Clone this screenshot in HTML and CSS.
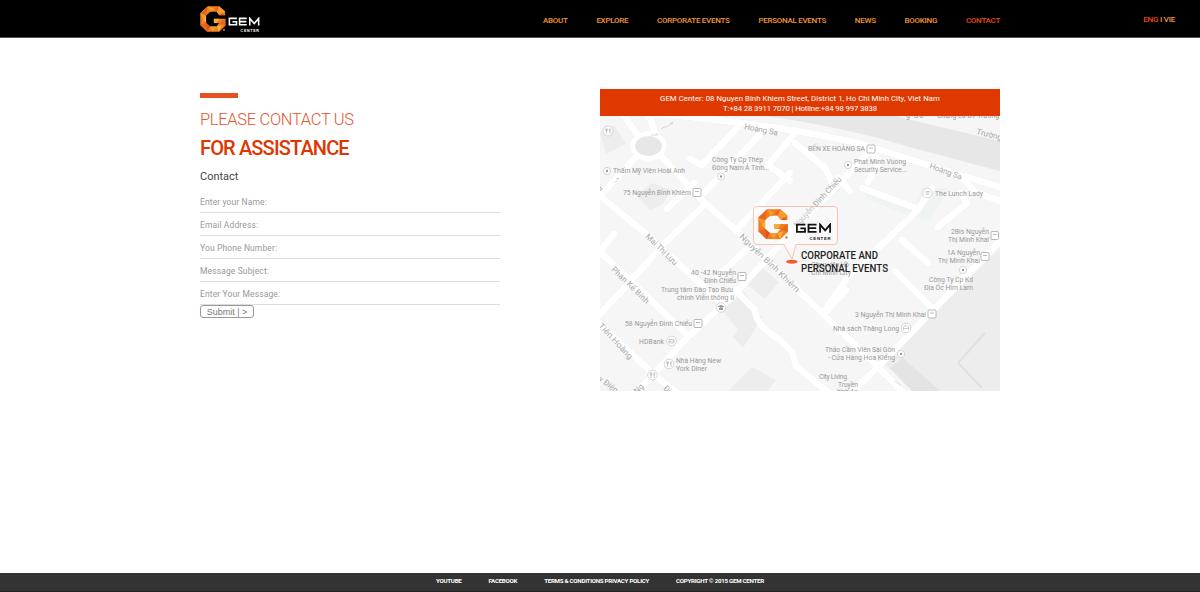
FILE: index.html
```html
<!DOCTYPE html>
<html lang="en">
<head>
<meta charset="utf-8">
<title>GEM Center - Contact</title>
<link rel="stylesheet" href="styles.css">
</head>
<body>
<svg class="defs" width="0" height="0">
  <symbol id="gem-g" viewBox="0 0 90 90">
    <path fill="#f07f1e" d="M27 1H66L87 19V32H67L58 20H36L21 33V58L35 71H57L66 59H48V44H88V68L66 89H25L1 66V25Z"/>
    <path fill="#f79a30" d="M27 1L50 10L36 20ZM66 1L87 19L67 32L58 20ZM1 25L21 33L11 48ZM35 71L57 71L45 89Z"/>
    <path fill="#e8661f" d="M1 25L27 1L21 33ZM50 10L66 1L58 20ZM1 66L21 58L25 89ZM88 44L66 59L88 68Z"/>
    <path fill="#fbab3c" d="M11 48L21 33V58ZM66 89L57 71L75 66ZM48 44H67L58 59H48Z"/>
    <path fill="#d9541d" d="M25 89L35 71L21 58ZM87 32L67 32L76 25Z"/>
  </symbol>
  <symbol id="gem-word" viewBox="0 0 94 44">
    <g fill="none" stroke="currentColor" stroke-width="4.6">
      <path d="M26 4H4V23H25V14H13M55 4H34V23H55M34 13.500H54M64 25V4L77 19L90 4V25"/>
    </g>
    <text class="word-sub" x="37" y="43" textLength="54">CENTER</text>
  </symbol>
</svg>

<header class="header">
  <div class="wrap header-row">
    <a class="logo"><svg class="logo-g"><use href="#gem-g"/></svg><i class="logo-dot"></i><svg class="logo-word"><use href="#gem-word"/></svg></a>
    <nav class="nav">
      <a>ABOUT</a><a>EXPLORE</a><a>CORPORATE EVENTS</a><a>PERSONAL EVENTS</a><a>NEWS</a><a>BOOKING</a><a class="active">CONTACT</a>
    </nav>
  </div>
  <div class="lang"><span class="active">ENG</span> I VIE</div>
</header>

<main class="wrap main">
  <section class="contact">
    <div class="accent"></div>
    <h1 class="title"><span class="title-light">PLEASE CONTACT US</span><span class="title-bold">FOR ASSISTANCE</span></h1>
    <h2 class="subtitle">Contact</h2>
    <form class="form">
      <label class="field">Enter your Name:</label>
      <label class="field">Email Address:</label>
      <label class="field">You Phone Number:</label>
      <label class="field">Message Subject:</label>
      <label class="field">Enter Your Message:</label>
      <button class="submit" type="button">Submit | &gt;</button>
    </form>
  </section>

  <section class="location">
    <p class="address"><span class="street">GEM Center: 08 Nguyen Binh Khiem Street, District 1, Ho Chi Minh City, Viet Nam</span><span class="phones">T:+84 28 3911 7070 | Hotline:+84 98 997 3838</span></p>
    <svg class="map" viewBox="600 116 400 275">
      <rect x="600" y="116" width="400" height="275" fill="#f6f6f6"/>
      <g fill="#ededed">
        <path d="M600 133L614 125L626 144L606 154ZM636 195L652 183L672 190L662 205L650 210ZM742 280L762 268L779 282L765 299ZM722 310L745 292L762 318L743 348L733 337L738 330ZM728 391L752 367L776 380L768 391ZM1000 248L884 364L914 391H1000Z"/>
        <path fill="#e7e7e7" d="M765 116H895L1000 141V171Q930 153 882 139Q820 123 765 116Z"/>
        <path fill="#e4e4e4" d="M890 368L903 358L940 391H912Z"/>
        <path fill="#f0f3f3" d="M864 190L915 205L922 188H948L930 221L908 215L866 199Z"/>
      </g>
      <path fill="none" stroke="#e0e0e0" stroke-width="2" d="M985 333L958 363L982 388"/>
      <g class="roads-edge"><use href="#roads"/></g>
      <g id="roads" class="roads">
        <path d="M622 113L640 138M655 136Q653 120 645 113M637 156L600 196M661 156L705 203L738 232L795 287L878 367L905 394"/>
        <path d="M650 113Q780 125 858 143Q930 166 1003 188"/>
        <path d="M738 127L702 165L690 159M765 129L700 197M795 133L768 165L790 181M790 173L736 230"/>
        <path d="M635 394L685 340L738 290L795 228L836 187L870 150M600 196L645 233L680 265L722 303M705 204L665 243L618 295L597 317M597 249L648 297L688 336M597 321L653 374L678 394"/>
        <path d="M718 276L752 244M850 394L878 367L933 310L1003 238M825 310L848 277L918 210L932 188M827 311L846 290M933 309L895 271M928 263L902 240M938 227L967 203L960 193M862 188L918 209"/>
        <path d="M667 209L694 183M614 234L601 250M735 290L755 310Q755 325 780 340L792 352L796 366L830 394M839 178L850 191M795 143L825 168L835 188M870 151L880 161L868 182M960 175L975 192L1003 202"/>
      </g>
      <ellipse cx="648.500" cy="146" rx="18" ry="15" fill="#fff"/>
      <ellipse cx="648.500" cy="146" rx="13" ry="9.500" fill="#e7e7e7" stroke="#ddd" stroke-width=".5"/>
      <g class="places">
        <text x="613" y="173" textLength="72">Thẩm Mỹ Viện Hoài Anh</text>
        <text x="712" y="162" textLength="51">Công Ty Cp Thép</text>
        <text x="712" y="170" textLength="57">Đông Nam Á Tính...</text>
        <text x="623" y="195" textLength="68">75 Nguyễn Bỉnh Khiêm</text>
        <text x="808" y="151" textLength="57">BẾN XE HOÀNG SA</text>
        <text x="854" y="164" textLength="52">Phat Minh Vuong</text>
        <text x="854" y="172" textLength="53">Security Service...</text>
        <text x="935" y="196" textLength="48">The Lunch Lady</text>
        <text x="951" y="234" textLength="38">2Bis Nguyễn</text>
        <text x="948" y="242" textLength="41">Thị Minh Khai</text>
        <text x="947" y="255" textLength="33">1A Nguyễn</text>
        <text x="938" y="263" textLength="42">Thị Minh Khai</text>
        <text x="929" y="282" textLength="44">Công Ty Cp Kd</text>
        <text x="924" y="290" textLength="49">Địa Ốc Him Lam</text>
        <text x="691" y="275" textLength="45">40 -42 Nguyễn</text>
        <text x="704" y="283" textLength="32">Đình Chiểu</text>
        <text x="661" y="292" textLength="72">Trung tâm Đào Tạo Bưu</text>
        <text x="677" y="300" textLength="57">chính Viễn thông II</text>
        <text x="625" y="326" textLength="67">58 Nguyễn Đình Chiểu</text>
        <text x="639" y="344" textLength="25">HDBank</text>
        <text x="676" y="363" textLength="45">Nhà Hàng New</text>
        <text x="676" y="371" textLength="31">York Diner</text>
        <text x="855" y="317" textLength="71">3 Nguyễn Thị Minh Khai</text>
        <text x="833" y="331" textLength="66">Nhà sách Thăng Long</text>
        <text x="825" y="352" textLength="70">Thảo Cầm Viên Sài Gòn</text>
        <text x="828" y="360" textLength="67">- Cửa Hàng Hoa Kiểng</text>
        <text x="819" y="379" textLength="28">City Living</text>
        <text x="838" y="387" textLength="20">Truyền</text>
        <text x="837" y="394" textLength="21">hình An</text>
        <text x="811" y="267" textLength="38">Công viên Hồ</text>
        <text x="811" y="275" textLength="40">Chi Minh City</text>
        <text x="937" y="118" textLength="62">Chung cư D7 Trường</text>
        <text x="906" y="118" textLength="17">g Sa</text>
      </g>
      <g class="streets">
        <text transform="translate(744 129) rotate(11)" textLength="34">Hoàng Sa</text>
        <text transform="translate(976 134) rotate(14)" textLength="26">Trường</text>
        <text transform="translate(929 168) rotate(20)" textLength="34">Hoàng Sa</text>
        <text transform="translate(645 237) rotate(44)" textLength="41">Mai Thị Lựu</text>
        <text transform="translate(739 237) rotate(44)" textLength="80" lengthAdjust="spacingAndGlyphs">Nguyễn Bỉnh Khiêm</text>
        <text transform="translate(797 228) rotate(-47)" textLength="66">Nguyễn Đình Chiểu</text>
        <text transform="translate(611 270) rotate(44)" textLength="49">Phan Kế Bính</text>
        <text transform="translate(598 326) rotate(47)" textLength="46" lengthAdjust="spacingAndGlyphs">Tiên Hoàng</text>
        <text transform="translate(598 380) rotate(37)" textLength="22">y Điệp</text>
        <text transform="translate(663 389) rotate(42)">Đi</text>
        <text transform="translate(637 394) rotate(-45)">Ng</text>
        <text transform="translate(597 195) rotate(-50)">Lu</text>
      </g>
      <g class="dots">
        <circle cx="607" cy="171" r="3.600"/><circle cx="721" cy="176.500" r="3.600"/><circle cx="848" cy="165" r="3.600"/><circle cx="963" cy="270" r="3.600"/><circle cx="901" cy="354" r="3.600"/>
      </g>
      <g fill="#999"><circle cx="607" cy="171" r="1.200"/><circle cx="721" cy="176.500" r="1.200"/><circle cx="848" cy="165" r="1.200"/><circle cx="963" cy="270" r="1.200"/><circle cx="901" cy="354" r="1.200"/></g>
      <g class="dots">
        <circle cx="608" cy="131" r="5"/><circle cx="652.500" cy="375" r="4.800"/><circle cx="669" cy="364" r="4.800"/><circle cx="671.500" cy="341" r="4.800"/><circle cx="721" cy="307.500" r="4.800"/><circle cx="906" cy="328" r="4.800"/><circle cx="927.500" cy="193" r="4.800"/>
      </g>
      <g class="glyphs">
        <path d="M606.500 128.500V134M605.800 128.500V131H607.200V128.500M610 134V128.500L609.300 131H610M651 372.500V378M650.300 372.500V375H651.700V372.500M654.500 378V372.500L653.800 375H654.500M667.500 361.500V367M666.800 361.500V364H668.200V361.500M671 367V361.500L670.300 364H671"/>
        <path d="M669 339.500H674V343H669ZM669 341.200H674M903.500 330V327Q906 324 908.500 327V330M903.500 328.500H908.500M925.500 191.500H930M925.500 193H929.500M926 194.500H929"/>
        <path fill="#999" stroke="none" d="M717.500 306.500L721 304.800L724.500 306.500L721 308ZM719 308H723V310H719Z"/>
      </g>
      <g class="stops">
        <rect x="693" y="188.500" width="8" height="8" rx="1"/><rect x="867" y="145" width="8" height="8" rx="1"/><rect x="991" y="231.500" width="7.500" height="8" rx="1"/><rect x="981" y="252.500" width="8" height="8" rx="1"/><rect x="738" y="272.500" width="8" height="8" rx="1"/><rect x="694" y="319.500" width="8" height="8" rx="1"/><rect x="928" y="310" width="8" height="8" rx="1"/>
        <path d="M695 191.500H699M869 148H873M993 234.500H996.500M983 255.500H987M740 275.500H744M696 322.500H700M930 313H934"/>
      </g>
      <path fill="none" stroke="#c8c8c8" stroke-width=".7" d="M661 129L666 126M665 128L673 123L670 123M651 135H658L656 133M615 183L619 178L616 179M895 381L901 386"/>
      <path class="callout" d="M757 206.500H834Q837.500 206.500 837.500 210V240.500Q837.500 244.500 834 244.500H796L792 259L784 244.500H757Q753.500 244.500 753.500 240.500V210Q753.500 206.500 757 206.500Z"/>
      <ellipse cx="791.800" cy="261.700" rx="5.800" ry="2" fill="#f15a29"/>
      <use href="#gem-g" x="758" y="209" width="30.500" height="30.500"/>
      <circle cx="786.500" cy="237.500" r="1.200" fill="#e9692c"/>
      <use class="word-dark" href="#gem-word" x="795" y="223" width="37" height="17"/>
      <g class="pin-label">
        <text x="801" y="259.300" textLength="77" lengthAdjust="spacingAndGlyphs">CORPORATE AND</text>
        <text x="801" y="271.600" textLength="87" lengthAdjust="spacingAndGlyphs">PERSONAL EVENTS</text>
      </g>
    </svg>
  </section>
</main>

<footer class="footer">
  <a>YOUTUBE</a><a>FACEBOOK</a><a>TERMS &amp; CONDITIONS PRIVACY POLICY</a><span>COPYRIGHT © 2015 GEM CENTER</span>
</footer>
</body>
</html>
```
FILE: styles.css
```css
* { box-sizing: border-box; }
body {
  margin: 0;
  height: 592px;
  display: flex;
  flex-direction: column;
  background: #fff;
  font-family: Roboto, "Liberation Sans", sans-serif;
  overflow: hidden;
}
.defs { position: absolute; }
.wrap { width: 800px; margin: 0 auto; }

.header {
  position: relative;
  height: 38px;
  flex: none;
  background: #000;
  border-bottom: 1px solid #555;
}
.header-row { display: flex; justify-content: space-between; height: 37px; }
.logo { display: flex; padding-top: 6px; color: #fff; }
.logo-g { width: 26px; height: 26px; }
.logo-dot { width: 2px; height: 2px; margin: 23px 0 0 -3px; border-radius: 50%; background: #e9692c; }
.logo-word { width: 32px; height: 15px; margin: 11px 0 0 3px; }
.word-sub { font: 700 11px "Liberation Sans", sans-serif; fill: currentColor; }
.nav { display: flex; gap: 28.8px; padding-top: 16px; }
.nav a, .lang { font-size: 8px; line-height: 9px; font-weight: 500; letter-spacing: -0.28px; color: #f0953a; white-space: nowrap; }
.lang { position: absolute; right: 25px; top: 15px; letter-spacing: -0.22px; }
.nav .active, .lang .active { color: #e8481c; }

.main { flex: 1; display: flex; justify-content: space-between; align-items: flex-start; }
.contact { width: 300px; padding-top: 55px; }
.accent { width: 38px; height: 5px; background: #e64f20; }
.title { margin: 10px 0 0; font-size: 16px; }
.title span { display: block; white-space: nowrap; }
.title-light { font-size: 16.5px; line-height: 24px; font-weight: 300; letter-spacing: -.32px; color: #e4552e; }
.title-bold { margin-top: 3px; font-size: 20px; line-height: 26px; font-weight: 500; letter-spacing: -.85px; color: #df3500; }
.subtitle { margin: 9px 0 0; font-size: 11px; line-height: 14px; font-weight: 400; letter-spacing: 0; color: #444; }
.form { display: flex; flex-direction: column; align-items: flex-start; margin-top: 6px; }
.field { width: 300px; height: 23px; padding-top: 6px; border-bottom: 1px solid #ddd; font-size: 8.5px; line-height: 13px; letter-spacing: .12px; color: #999; }
.submit {
  width: 54px; height: 13px; padding: 0; margin: 0;
  border: 1px solid #999; border-radius: 3px; background: #fff;
  font: 9px/10px "Liberation Sans", Arial, sans-serif; color: #777;
}

.location { width: 400px; padding-top: 51px; }
.address {
  margin: 0; height: 27px; padding-top: 4px;
  display: flex; flex-direction: column; align-items: center;
  background: #df3900; color: #fff; font-size: 7.8px; line-height: 10.5px; letter-spacing: .04px; white-space: nowrap;
}
.street { line-height: 11px; }
.phones { line-height: 10px; letter-spacing: -.14px; }
.map { display: block; width: 400px; height: 275px; }
.roads { fill: none; stroke: #fff; stroke-width: 6.5; stroke-linecap: round; stroke-linejoin: round; }
.roads-edge { filter: drop-shadow(0 0 .6px #ccc); }
.places text { font-size: 6.8px; fill: #999; }
.streets text { font-size: 8px; fill: #a8a8a8; }
.dots { fill: #fff; stroke: #c6c6c6; stroke-width: .7; }
.glyphs { fill: none; stroke: #aaa; stroke-width: .6; }
.stops { fill: #fff; stroke: #b0b0b0; stroke-width: .9; }
.callout { fill: rgba(255, 255, 255, .3); stroke: #f5b59b; stroke-width: .8; }
.word-dark { color: #111; }
.pin-label text { font-size: 10px; font-weight: 500; fill: #222; }

.footer {
  height: 19px; flex: none; display: flex; justify-content: center; gap: 27px; padding-top: 3px;
  background: #333; border-bottom: 1px solid #222;
  color: #fff; font-size: 6.2px; line-height: 10px; font-weight: 700; letter-spacing: -.28px; white-space: nowrap;
}
```
